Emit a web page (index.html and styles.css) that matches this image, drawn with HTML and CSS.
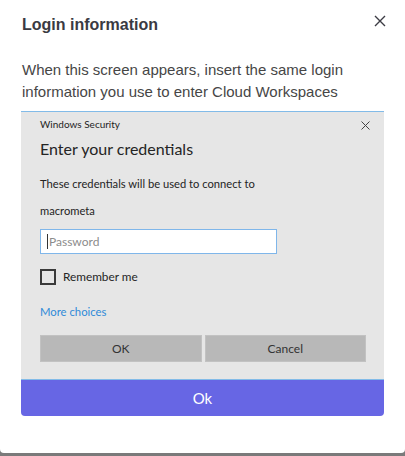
FILE: index.html
```html
<!DOCTYPE html>
<html lang="en">
<head>
<meta charset="utf-8">
<title>Login information</title>
<link rel="stylesheet" href="styles.css">
</head>
<body>
<div class="modal">
  <div class="modal-header">
    <h2 class="modal-title">Login information</h2>
    <button class="close-btn" aria-label="Close">
      <svg width="12" height="12" viewBox="0 0 12 12"><path d="M1 1L11 11M11 1L1 11" stroke="#3c3c44" stroke-width="1.4" fill="none"/></svg>
    </button>
  </div>
  <p class="modal-text">When this screen appears, insert the same login information you use to enter Cloud Workspaces</p>
  <div class="win-shot">
    <div class="win-top">
      <span class="win-caption">Windows Security</span>
      <svg class="win-x" width="9" height="9" viewBox="0 0 9 9"><path d="M0.5 0.5L8.5 8.5M8.5 0.5L0.5 8.5" stroke="#444" stroke-width="1" fill="none"/></svg>
    </div>
    <div class="win-heading">Enter your credentials</div>
    <div class="win-line">These credentials will be used to connect to</div>
    <div class="win-line win-host">macrometa</div>
    <div class="win-input"><span class="caret"></span><span class="placeholder">Password</span></div>
    <div class="win-check"><span class="box"></span><span>Remember me</span></div>
    <div class="win-link">More choices</div>
    <div class="win-buttons">
      <div class="win-btn">OK</div>
      <div class="win-btn">Cancel</div>
    </div>
  </div>
  <button class="ok-btn">Ok</button>
</div>
</body>
</html>
```
FILE: styles.css
```css
html, body {
  margin: 0;
  padding: 0;
}
body {
  background: #7a7a7a;
  width: 405px;
  height: 456px;
  overflow: hidden;
}
.modal {
  background: #fff;
  height: 453px;
  box-sizing: border-box;
  padding: 0 21px;
  border-radius: 0 0 4px 4px;
  font-family: "Liberation Sans", Arial, sans-serif;
}
.modal-header {
  display: flex;
  justify-content: space-between;
  align-items: flex-start;
  padding-top: 13px;
}
.modal-title {
  margin: 0;
  font-size: 16px;
  line-height: 24px;
  font-weight: bold;
  color: #3a3a42;
  padding-left: 1px;
}
.close-btn {
  border: 0;
  background: none;
  padding: 0;
  margin: 2px -2px 0 0;
  width: 12px;
  height: 12px;
  display: flex;
}
.modal-text {
  margin: 22px 0 0;
  font-size: 15px;
  line-height: 22px;
  color: #464646;
  padding-left: 1px;
}
.win-shot {
  margin-top: 8px;
  height: 269px;
  box-sizing: border-box;
  background: #e6e6e6;
  border-top: 1px solid #82bbe8;
  border-bottom: 1px solid #82bbe8;
  padding: 5px 18px 0 19px;
  font-family: Lato, "Noto Sans", sans-serif;
  color: #242424;
}
.win-top {
  display: flex;
  justify-content: space-between;
  align-items: center;
  height: 14px;
}
.win-caption {
  font-size: 10px;
  line-height: 14px;
}
.win-x {
  margin-right: -4px;
  margin-top: 2px;
}
.win-heading {
  margin-top: 8px;
  font-size: 16px;
  line-height: 20px;
}
.win-line {
  margin-top: 17px;
  font-size: 11.2px;
  line-height: 16px;
}
.win-host {
  margin-top: 11px;
}
.win-input {
  margin-top: 10px;
  width: 237px;
  height: 25px;
  box-sizing: border-box;
  border: 1px solid #7fb6ea;
  background: #fff;
  display: flex;
  align-items: center;
  padding-left: 6px;
}
.caret {
  width: 1px;
  height: 15px;
  background: #333;
}
.placeholder {
  font-size: 12px;
  color: #8c8c8c;
  margin-left: 1px;
}
.win-check {
  margin-top: 15px;
  display: flex;
  align-items: center;
  gap: 7px;
  font-size: 11.8px;
  line-height: 16px;
}
.box {
  width: 16px;
  height: 16px;
  box-sizing: border-box;
  border: 2px solid #3a3a3a;
}
.win-link {
  margin-top: 19px;
  font-size: 11.3px;
  line-height: 16px;
  color: #2f8ad8;
}
.win-buttons {
  margin-top: 15px;
  display: flex;
  gap: 3px;
}
.win-btn {
  flex: 1;
  height: 27px;
  box-sizing: border-box;
  background: #b8b8b8;
  border: 1px solid #c2c2c2;
  display: flex;
  align-items: center;
  justify-content: center;
  font-size: 12px;
  color: #333;
}
.ok-btn {
  display: block;
  width: 100%;
  height: 36px;
  border: 0;
  border-radius: 0 0 4px 4px;
  background: #6766e4;
  color: #fff;
  font-family: Lato, "Noto Sans", sans-serif;
  font-size: 15px;
  padding: 0;
}
```
